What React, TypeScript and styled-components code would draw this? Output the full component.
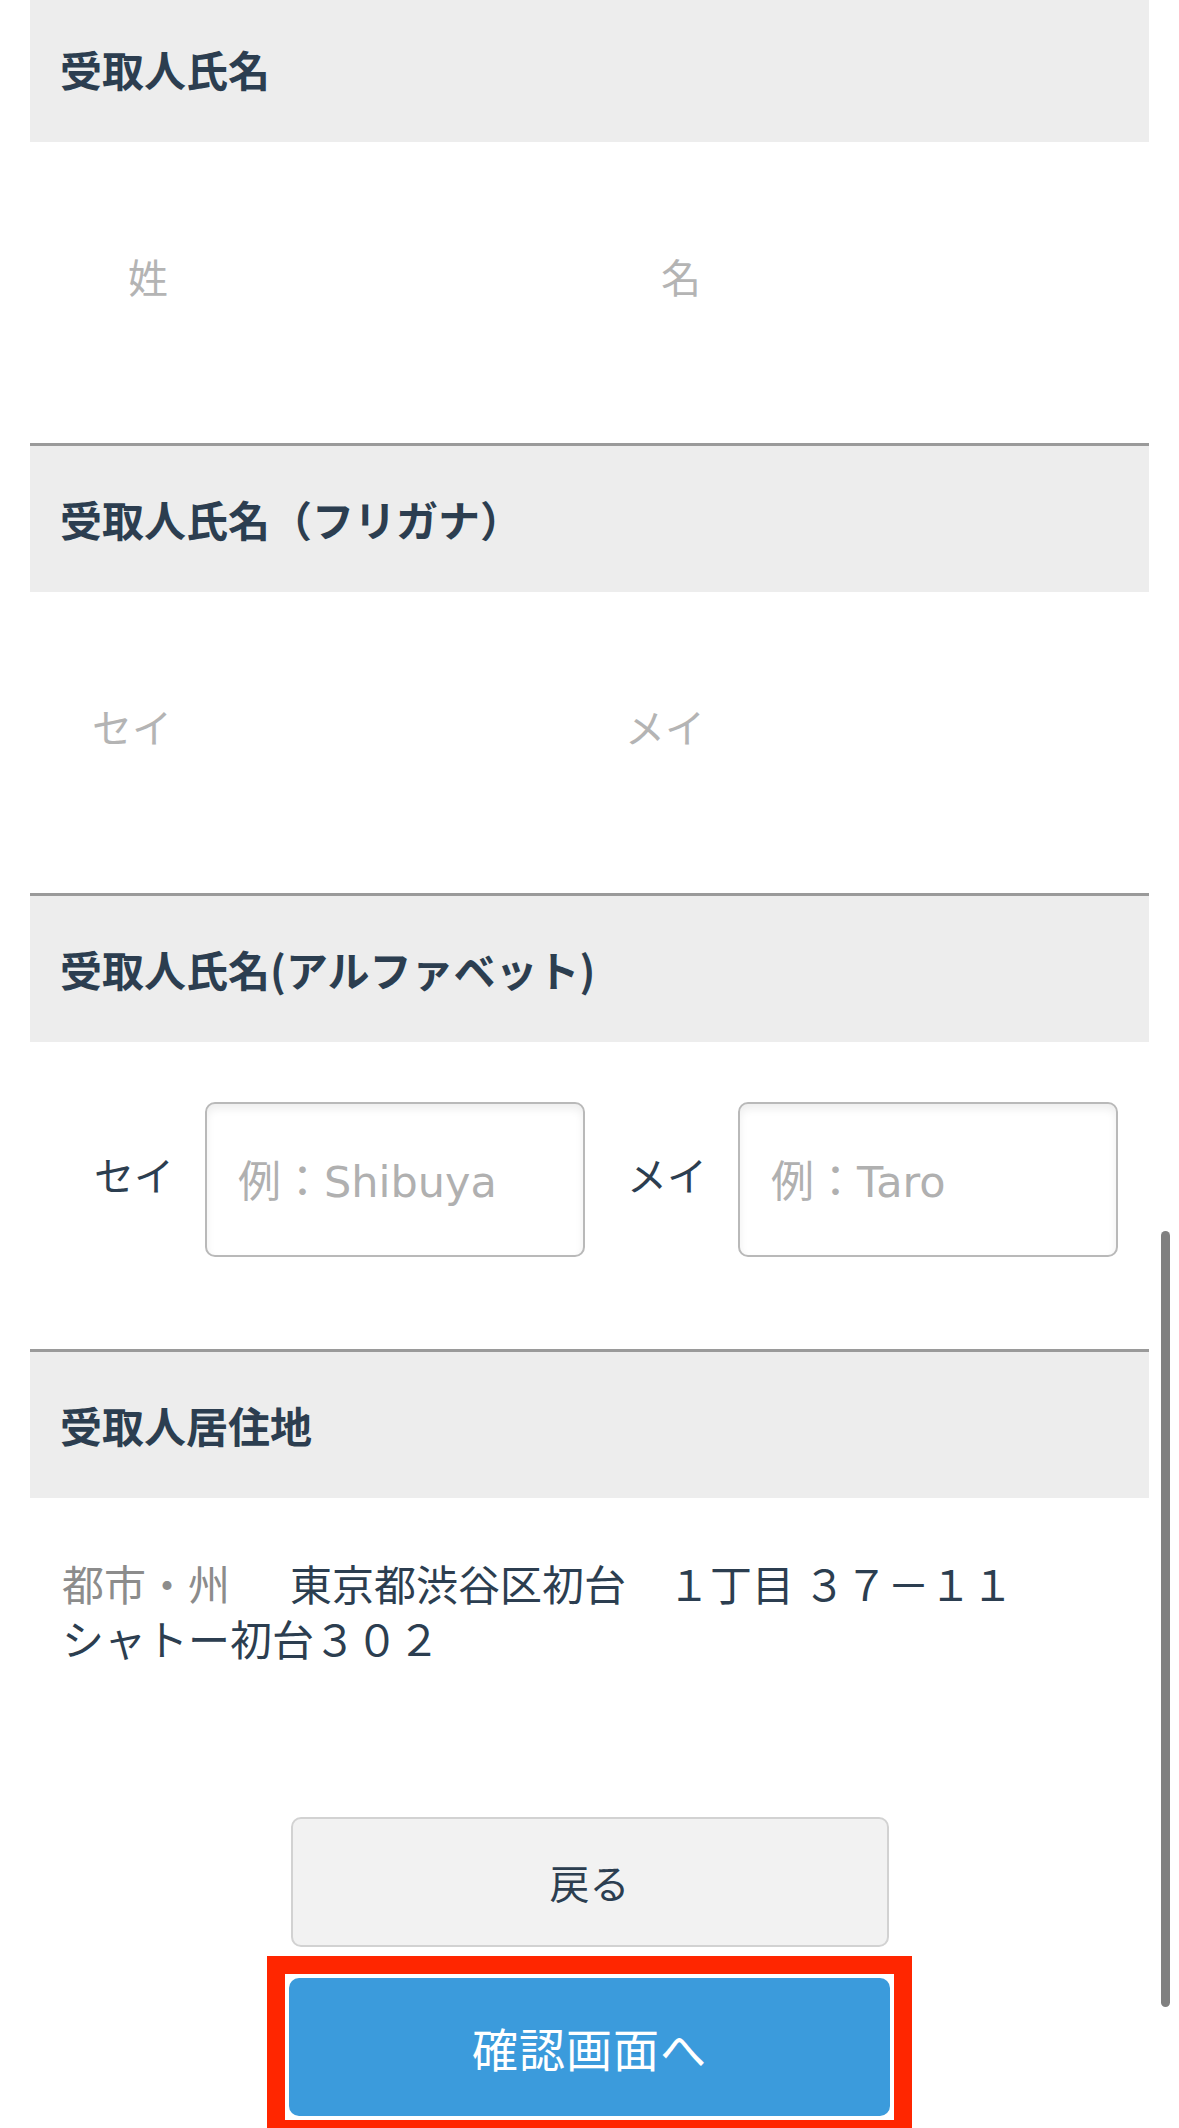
import * as React from "react";
import styled, { createGlobalStyle } from "styled-components";

const GlobalStyle = createGlobalStyle`
  html, body {
    margin: 0;
    padding: 0;
    background: #ffffff;
  }
  body {
    font-family: "Noto Sans CJK JP", "Noto Sans", sans-serif;
    color: #2c3e50;
    overflow: hidden;
  }
`;

const Page = styled.div`
  margin-top: -4px;
  padding: 0 30px;
`;

const Section = styled.section<{ $divider?: boolean }>`
  border-top: ${(p) => (p.$divider ? "3px solid #9a9a9a" : "none")};
`;

const SectionHeader = styled.h2`
  margin: 0;
  height: 146px;
  display: flex;
  align-items: center;
  padding-left: 30px;
  background: #ededed;
  font-size: 42px;
  font-weight: 700;
  line-height: 1;
  color: #2c3e50;
`;

const NameBody = styled.div`
  height: 301px;
  box-sizing: border-box;
  padding: 112px 0 0 32px;
  display: grid;
  grid-template-columns: 533px 533px;
  align-items: start;
`;

const PlainInput = styled.input<{ $indent: number }>`
  width: 100%;
  box-sizing: border-box;
  border: none;
  outline: none;
  background: transparent;
  padding: 0 0 0 ${(p) => p.$indent}px;
  margin: 0;
  font-family: inherit;
  font-size: 40px;
  line-height: 44px;
  height: 44px;
  color: #2c3e50;

  &::placeholder {
    color: #b4b4b4;
  }
`;

const AlphaBody = styled.div`
  height: 307px;
  box-sizing: border-box;
  padding: 60px 0 0 32px;
  display: grid;
  grid-template-columns: 533px 533px;
  align-items: start;
`;

const AlphaField = styled.label`
  display: flex;
  align-items: center;
  gap: 31px;
  padding-left: 32px;
`;

const FieldLabel = styled.span`
  width: 80px;
  font-size: 40px;
  line-height: 1;
  color: #2c3e50;
  margin-top: -12px;
`;

const BoxInput = styled.input`
  width: 380px;
  height: 155px;
  box-sizing: border-box;
  border: 2px solid #b9b9b9;
  border-radius: 10px;
  padding: 4px 0 0 31px;
  margin: 0;
  background: #ffffff;
  box-shadow: inset 0 5px 8px rgba(0, 0, 0, 0.07);
  font-family: "DejaVu Sans", "Noto Sans CJK JP", sans-serif;
  font-size: 43px;
  color: #2c3e50;
  outline: none;

  &::placeholder {
    color: #b0b0b0;
  }
`;

const AddressBody = styled.div`
  padding: 57px 0 0 32px;
`;

const AddressText = styled.p`
  margin: 0;
  font-size: 42px;
  line-height: 55px;
  color: #2c3e50;
`;

const AddressLabel = styled.span`
  color: #8c8c8c;
  margin-right: 60px;
`;

const Actions = styled.div`
  display: flex;
  flex-direction: column;
  align-items: center;
  padding-top: 152px;
`;

const Button = styled.button<{ $primary?: boolean }>`
  box-sizing: border-box;
  display: flex;
  align-items: center;
  justify-content: center;
  margin: 0;
  padding: 0;
  border-radius: 10px;
  font-family: inherit;
  cursor: pointer;
  width: ${(p) => (p.$primary ? "601px" : "598px")};
  height: ${(p) => (p.$primary ? "138px" : "130px")};
  font-size: ${(p) => (p.$primary ? "46px" : "40px")};
  letter-spacing: ${(p) => (p.$primary ? "1px" : "0")};
  color: ${(p) => (p.$primary ? "#ffffff" : "#2c3e50")};
  background: ${(p) => (p.$primary ? "#3b9bdc" : "#f2f2f2")};
  border: ${(p) => (p.$primary ? "none" : "2px solid #d2d2d2")};
`;

const HighlightFrame = styled.div`
  margin-top: 9px;
  border: 18px solid #ff2600;
  padding: 4px;
  background: #ffffff;
`;

const ScrollIndicator = styled.div`
  position: fixed;
  top: 1231px;
  right: 9px;
  width: 9px;
  height: 776px;
  border-radius: 5px;
  background: #808080;
`;

export default function App() {
  return (
    <>
      <GlobalStyle />
      <Page>
        <Section>
          <SectionHeader>受取人氏名</SectionHeader>
          <NameBody>
            <PlainInput $indent={66} placeholder="姓" />
            <PlainInput $indent={66} placeholder="名" />
          </NameBody>
        </Section>

        <Section $divider>
          <SectionHeader>受取人氏名（フリガナ）</SectionHeader>
          <NameBody>
            <PlainInput $indent={30} placeholder="セイ" />
            <PlainInput $indent={30} placeholder="メイ" />
          </NameBody>
        </Section>

        <Section $divider>
          <SectionHeader>受取人氏名(アルファベット)</SectionHeader>
          <AlphaBody>
            <AlphaField>
              <FieldLabel>セイ</FieldLabel>
              <BoxInput placeholder="例：Shibuya" />
            </AlphaField>
            <AlphaField>
              <FieldLabel>メイ</FieldLabel>
              <BoxInput placeholder="例：Taro" />
            </AlphaField>
          </AlphaBody>
        </Section>

        <Section $divider>
          <SectionHeader>受取人居住地</SectionHeader>
          <AddressBody>
            <AddressText>
              <AddressLabel>都市・州</AddressLabel>
              東京都渋谷区初台　１丁目 ３７－１１
              <br />
              シャトー初台３０２
            </AddressText>
          </AddressBody>
          <Actions>
            <Button>戻る</Button>
            <HighlightFrame>
              <Button $primary>確認画面へ</Button>
            </HighlightFrame>
          </Actions>
        </Section>
      </Page>
      <ScrollIndicator />
    </>
  );
}
